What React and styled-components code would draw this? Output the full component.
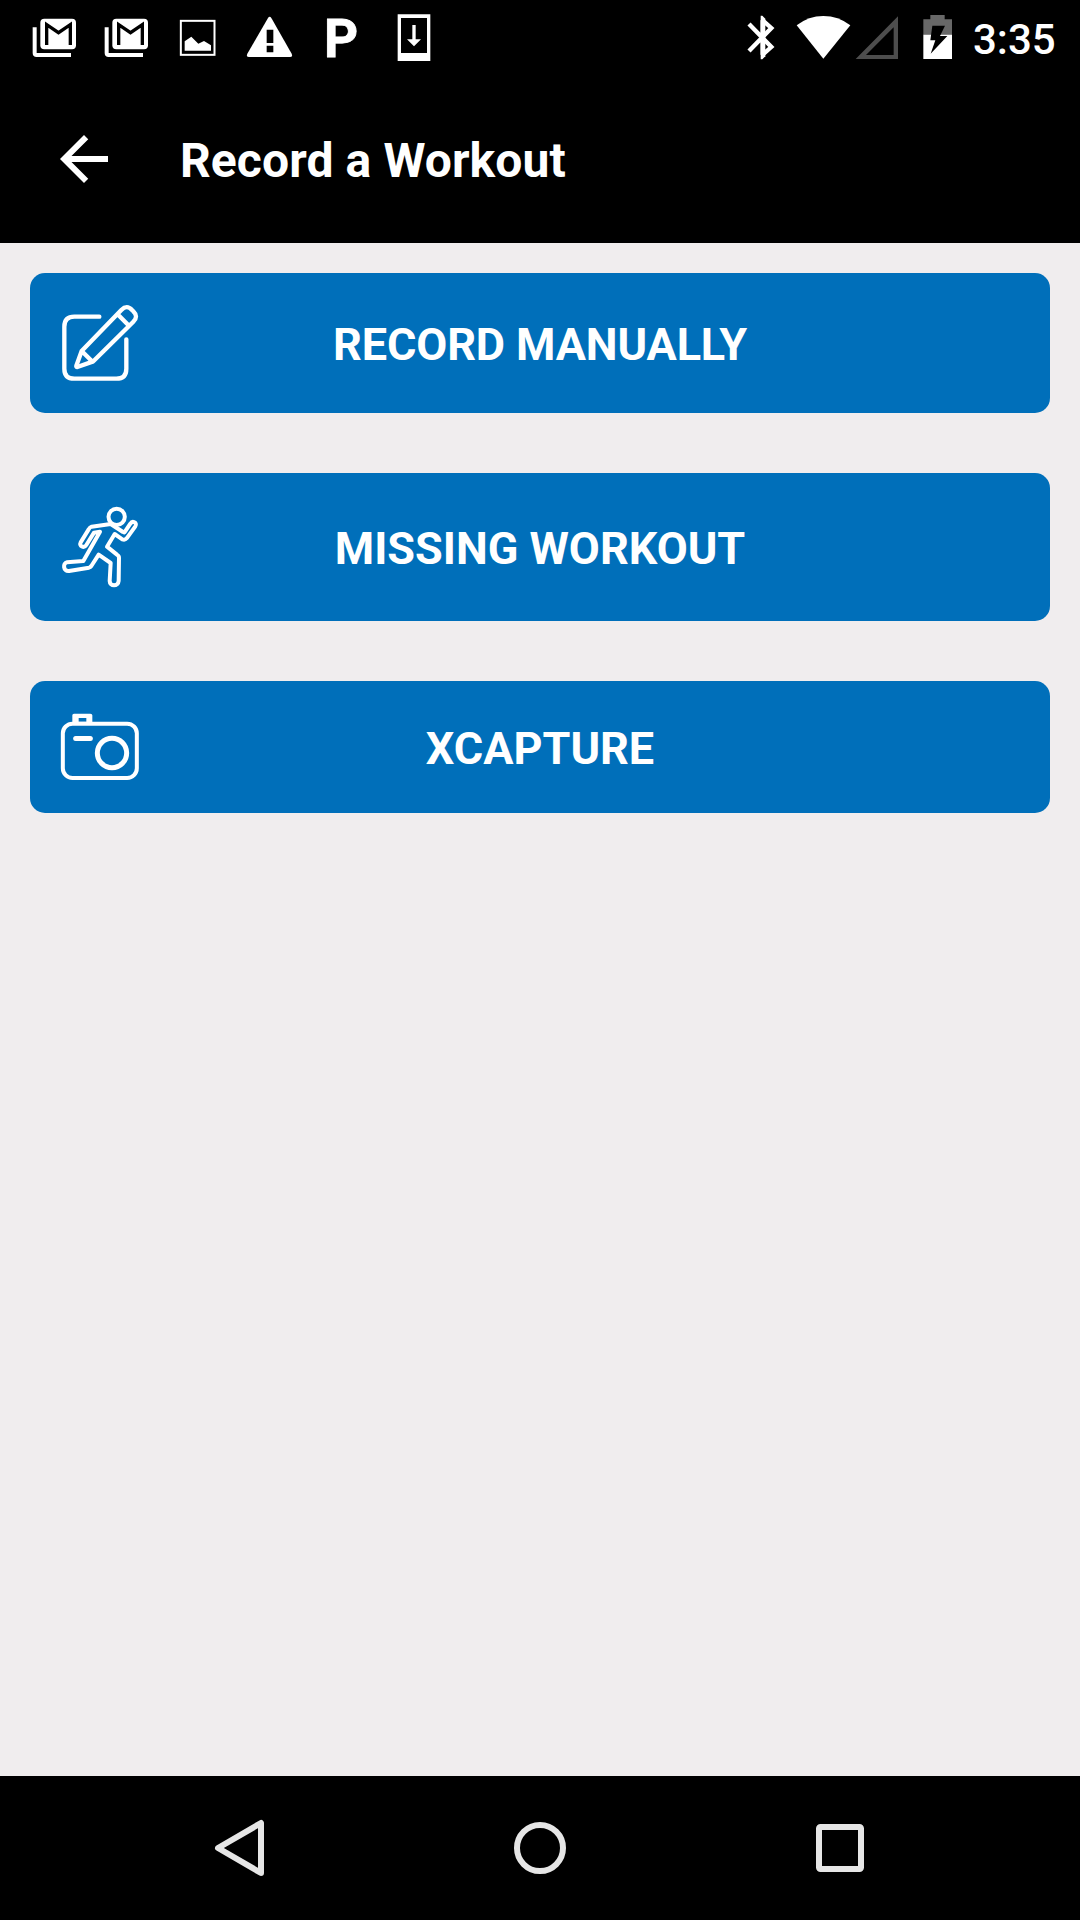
import React from "react";
import styled, { createGlobalStyle } from "styled-components";

const GlobalStyle = createGlobalStyle`
  * { box-sizing: border-box; }
  body { margin: 0; background: #f0edee; }
`;

const Screen = styled.div`
  width: 1080px;
  height: 1920px;
  display: flex;
  flex-direction: column;
  overflow: hidden;
  background: #f0edee;
  color: #fff;
  font-family: Roboto, "Liberation Sans", sans-serif;
`;

const StatusBar = styled.div`
  height: 75px;
  flex: none;
  display: flex;
  justify-content: space-between;
  padding-left: 18px;
  background: #000;
`;

const StatusGroup = styled.div`
  display: flex;
`;

const StatusIcon = styled.svg`
  display: block;
  flex: none;
  width: ${(p) => p.$width || 72}px;
  height: 75px;
  fill: #fff;
`;

const LetterIcon = styled.span`
  width: 72px;
  padding-right: 2px;
  text-align: center;
  font-size: 53px;
  font-weight: 700;
  line-height: 78px;
  -webkit-text-stroke: 0.8px #fff;
`;

const Clock = styled.span`
  width: 110px;
  padding-left: 3px;
  font-size: 42px;
  font-weight: 500;
  line-height: 79px;
`;

const AppBar = styled.header`
  height: 168px;
  flex: none;
  display: flex;
  align-items: center;
  gap: 60px;
  padding-left: 48px;
  background: #000;
`;

const BackButton = styled.button`
  display: flex;
  padding: 0;
  border: 0;
  background: none;
`;

const BackArrow = styled.svg`
  width: 72px;
  height: 72px;
  fill: #fff;
`;

const Title = styled.h1`
  margin: 0;
  padding-top: 4px;
  font-size: 48px;
  font-weight: 700;
  line-height: 56px;
  letter-spacing: 0.1px;
`;

const Actions = styled.main`
  flex: 1;
  display: flex;
  flex-direction: column;
  gap: 60px;
  padding: 30px;
`;

const ActionButton = styled.button`
  height: ${(p) => p.$height}px;
  display: grid;
  grid-template-columns: 80px 1fr 80px;
  align-items: center;
  padding: 0 30px;
  border: 0;
  border-radius: 15px;
  background: #006fba;
  color: #fff;
  font: 700 45px/54px Roboto, "Liberation Sans", sans-serif;
  text-align: center;
  text-transform: uppercase;
`;

const ActionLabel = styled.span`
  padding-top: 4px;
  letter-spacing: ${(p) => p.$tracking || 0}px;
`;

const ActionIcon = styled.svg`
  width: 80px;
  height: 80px;
  fill: none;
  stroke: #fff;
  stroke-width: ${(p) => p.$stroke || 13};
  stroke-linecap: round;
  stroke-linejoin: round;
`;

const NavBar = styled.nav`
  height: 144px;
  flex: none;
  display: flex;
  padding: 0 90px;
  background: #000;
`;

const NavButton = styled.button`
  flex: 1;
  display: flex;
  align-items: center;
  justify-content: center;
  padding: 0;
  border: 0;
  background: none;
`;

const NavIcon = styled.svg`
  width: 72px;
  height: 72px;
  fill: none;
  stroke: #e6e6e6;
  stroke-width: 6;
  stroke-linejoin: round;
`;

const MailIcon = () => (
  <StatusIcon viewBox="-6 0 216 225">
    <path d="M38 82H50V159H153V171H50Q38 171 38 159Z" />
    <rect x="61" y="56" width="107" height="92" rx="12" />
    <path d="M80 135V74L115.500 98L151 74V135" fill="none" stroke="#000" strokeWidth="10" />
  </StatusIcon>
);

const PictureIcon = () => (
  <StatusIcon viewBox="426 0 216 225">
    <rect x="482.500" y="62.500" width="101" height="102" fill="none" stroke="#fff" strokeWidth="6" />
    <path d="M494 152V124L514 110L535 131L552 123L573 136V152Z" />
  </StatusIcon>
);

const WarningIcon = () => (
  <StatusIcon viewBox="12 0 216 225">
    <path d="M114 54Q119 47 124 54L185 161Q189 171 180 171H57Q48 171 52 161Z" />
    <path d="M110 89H130V129H110ZM110 137H130V157H110Z" fill="#000" />
  </StatusIcon>
);

const DownloadIcon = () => (
  <StatusIcon viewBox="444 0 216 225">
    <path fillRule="evenodd" d="M503 43H601V183H503ZM513 54V159H591V54Z" />
    <path d="M547 75H557V118H573L552 139L531 118H547Z" />
  </StatusIcon>
);

const BluetoothIcon = () => (
  <StatusIcon $width={48} viewBox="30 0 144 225">
    <path d="M57 72L124 141L98 164V61L124 84L57 153" fill="none" stroke="#fff" strokeWidth="13" strokeMiterlimit="2" />
    <path d="M92 47H97L106 56V169L97 178H92Z" />
  </StatusIcon>
);

const WifiIcon = () => (
  <StatusIcon $width={66} viewBox="174 0 198 225">
    <path d="M200 76Q236 48 280 48Q325 48 361 76L280 176Z" />
  </StatusIcon>
);

const SignalIcon = () => (
  <StatusIcon $width={52} viewBox="372 0 156 225">
    <path fill="#4d4d4d" fillRule="evenodd" d="M504 49V177H377ZM491 82L408 165H491Z" />
  </StatusIcon>
);

const BatteryIcon = () => (
  <StatusIcon $width={64} viewBox="528 0 192 225">
    <path fill="#686868" d="M580 104V58H601V45H644V58H666V104Z" />
    <path d="M580 104H666V177H580Z" />
    <path fill="#000" d="M607 77H645L630 108H652L602 161L616 121H601Z" />
  </StatusIcon>
);

const EditIcon = () => (
  <ActionIcon viewBox="120 129 240 240">
    <path d="M238 170H163Q133 170 133 200V326Q133 356 163 356H289Q319 356 319 326V238" />
    <path d="M185 273L304 150Q321 133 336 150L340 154Q356 169 340 185L220 304L172 321Q168 321 169 317ZM185 273L216 304M295 165L324 194" />
  </ActionIcon>
);

const RunnerIcon = () => (
  <ActionIcon viewBox="120 126 240 240" overflow="visible" $stroke={12}>
    <circle cx="290" cy="155.500" r="24.500" />
    <path d="M272 177L215 185Q209 187 206 193L182 232C176 244 192 251 199 240L222 203L240 200L190 288L141 292C128 294 129 320 147 318L207 308Q211 307 214 303L236 269L272 294L269 348C269 365 295 365 296 348L297 278Q297 272 291 269L261 245L284 207L307 223Q315 226 320 220L346 184C353 172 337 166 331 176L315 200Q313 204 309 201Z" />
  </ActionIcon>
);

const CameraIcon = () => (
  <ActionIcon viewBox="120 111 240 240">
    <rect x="128.500" y="161" width="222" height="163" rx="29" strokeWidth="12" />
    <path d="M157 159V136Q157 131 162 131H211Q217 131 217 136V159ZM176 144V155H199V144Z" fill="#fff" fillRule="evenodd" stroke="none" />
    <path d="M167 205.500H211" strokeWidth="15" />
    <circle cx="276" cy="249" r="44" strokeWidth="15" />
  </ActionIcon>
);

const actions = [
  { label: "Record Manually", height: 140, tracking: -0.12, Icon: EditIcon },
  { label: "Missing Workout", height: 148, Icon: RunnerIcon },
  { label: "XCapture", height: 132, Icon: CameraIcon },
];

export default function App() {
  return (
    <Screen>
      <GlobalStyle />
      <StatusBar>
        <StatusGroup>
          <MailIcon />
          <MailIcon />
          <PictureIcon />
          <WarningIcon />
          <LetterIcon>P</LetterIcon>
          <DownloadIcon />
        </StatusGroup>
        <StatusGroup>
          <BluetoothIcon />
          <WifiIcon />
          <SignalIcon />
          <BatteryIcon />
          <Clock>3:35</Clock>
        </StatusGroup>
      </StatusBar>
      <AppBar>
        <BackButton aria-label="Back">
          <BackArrow viewBox="0 0 24 24">
            <path d="M20 11H7.830l5.590-5.590L12 4l-8 8 8 8 1.410-1.410L7.830 13H20v-2z" />
          </BackArrow>
        </BackButton>
        <Title>Record a Workout</Title>
      </AppBar>
      <Actions>
        {actions.map(({ label, height, tracking, Icon }) => (
          <ActionButton key={label} $height={height}>
            <Icon />
            <ActionLabel $tracking={tracking}>{label}</ActionLabel>
          </ActionButton>
        ))}
      </Actions>
      <NavBar>
        <NavButton aria-label="Back">
          <NavIcon viewBox="0 0 72 72">
            <path d="M14 36L57 11V61Z" />
          </NavIcon>
        </NavButton>
        <NavButton aria-label="Home">
          <NavIcon viewBox="0 0 72 72">
            <circle cx="36" cy="36" r="23" />
          </NavIcon>
        </NavButton>
        <NavButton aria-label="Overview">
          <NavIcon viewBox="0 0 72 72">
            <rect x="15" y="15" width="42" height="42" rx="1.500" />
          </NavIcon>
        </NavButton>
      </NavBar>
    </Screen>
  );
}
